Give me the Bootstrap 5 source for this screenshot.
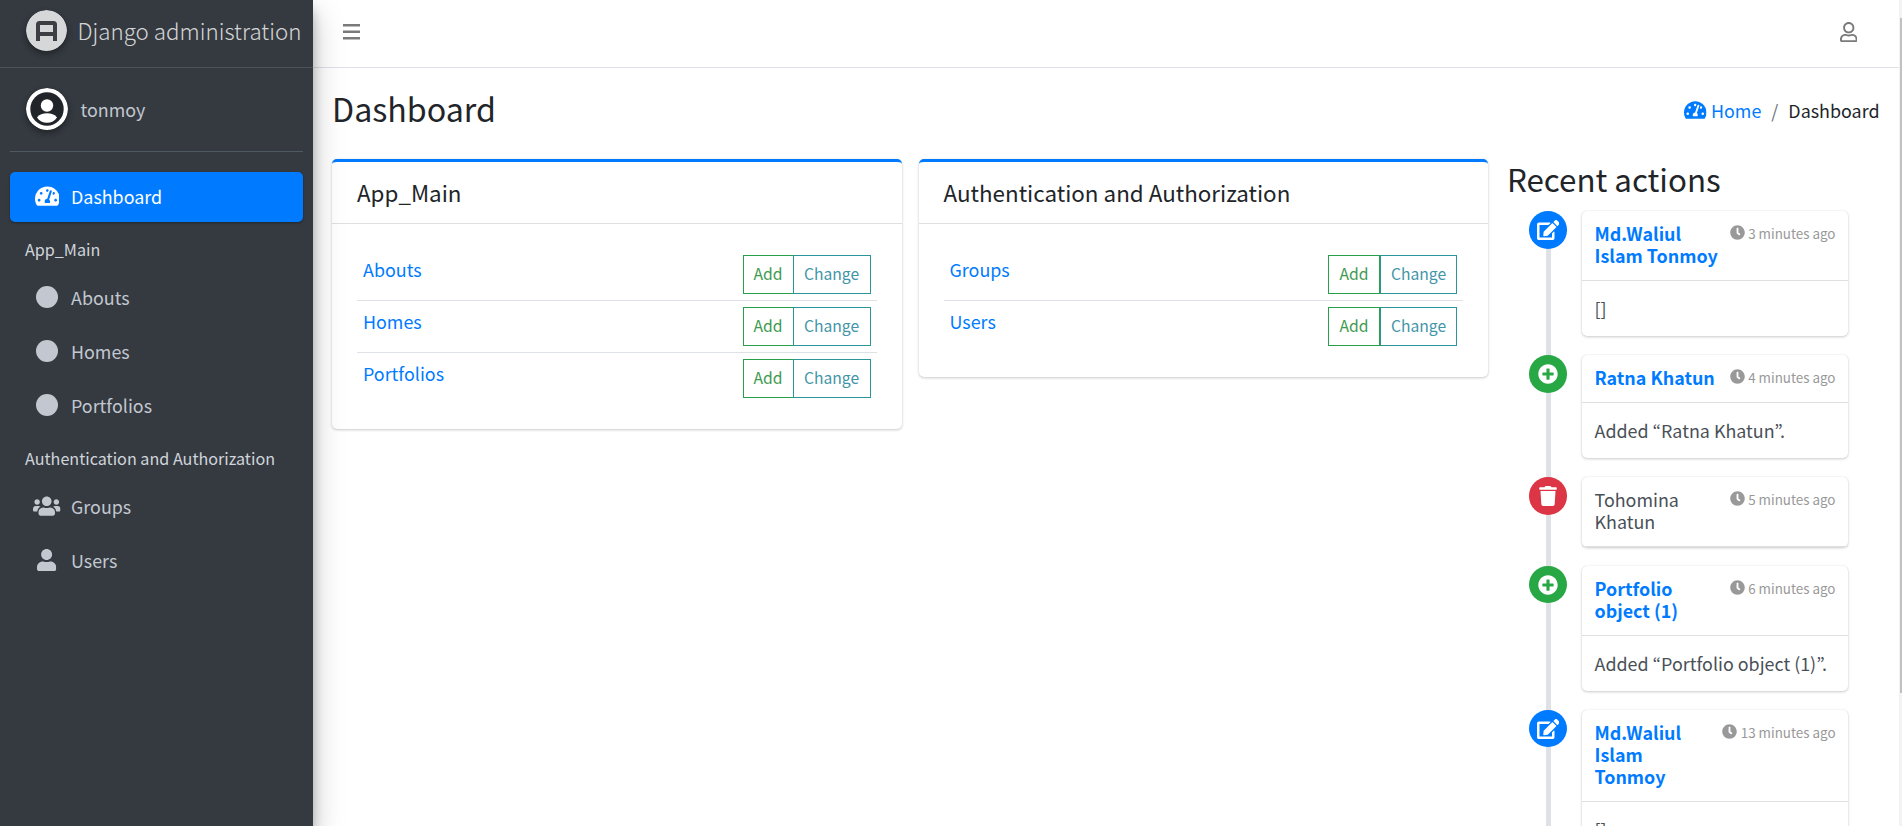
<!DOCTYPE html>
<html lang="en">
<head>
<meta charset="utf-8">
<title>Dashboard | Django administration</title>
<link rel="stylesheet" href="https://cdn.jsdelivr.net/npm/bootstrap@5.3.0/dist/css/bootstrap.min.css">
<style>
html { font-size: 20px; }
body { font-family: "Noto Sans CJK JP", "Noto Sans", sans-serif; font-size: 17.9px; line-height: 30px; color: #212529; background: #fff; height: 826px; overflow: hidden; }
a { color: #007bff; text-decoration: none; }
svg { fill: currentColor; display: block; flex: none; }
.shell { height: 826px; overflow: hidden; }
.side { width: 313px; height: 826px; background: #343a40; box-shadow: 0 14px 28px rgba(0,0,0,.25), 0 10px 10px rgba(0,0,0,.22); z-index: 5; flex: none; color: #c2c7d0; }
.brand { height: 68px; border-bottom: 1px solid #4b545c; padding: 10px 0 0 26px; color: rgba(255,255,255,.8); font-size: 22.35px; font-weight: 300; white-space: nowrap; gap: 10.5px; }
.brand span { padding-top: 5px; }
.round { border-radius: 50%; box-shadow: 0 3px 6px rgba(0,0,0,.16), 0 3px 6px rgba(0,0,0,.23); }
.who { height: 84px; margin: 0 10px 20px 10px; border-bottom: 1px solid #4f5962; padding: 20px 0 0 16px; gap: 12.5px; }
.who span { padding-top: 6px; }
.side .nav-link { color: #c2c7d0; height: 50px; margin: 0 10px 4px 10px; padding: 0 0 2px 21px; display: flex; align-items: center; border-radius: 5px; gap: 8px; }
.side .nav-link.active { background: #007bff; color: #fff; box-shadow: 0 1px 3px rgba(0,0,0,.12), 0 1px 2px rgba(0,0,0,.24); }
.ico { width: 32px; display: flex; justify-content: center; }
.grp { font-size: 16.15px; line-height: 27px; padding: 10px 0 0 25px; height: 47px; color: #d0d4db; }
.grp.first { height: 51px; padding-top: 14px; }
.topbar { height: 68px; border-bottom: 1px solid #dee2e6; color: #7a7a7a; padding: 0 45px 3px 30px; }
.head { padding: 18.5px 22.5px 0 19px; height: 91px; }
h1 { font-size: 32.2px; font-weight: 400; line-height: 43px; margin: 0; }
.crumb { padding-top: 8.5px; gap: 10px; }
.crumb svg { margin-right: 4px; }
.cols { padding-left: 19px; }
.panel { border: 0; border-top: 3px solid #007bff; border-radius: 5px; box-shadow: 0 0 1px rgba(0,0,0,.125), 0 1px 3px rgba(0,0,0,.2); width: 569.5px; flex: none; background: #fff; }
.panel h5 { font-size: 22.4px; font-weight: 400; line-height: 30px; height: 62px; padding: 15px 25px 0; margin: 0; border-bottom: 1px solid #dfdfdf; }
.rows { padding: 25px; }
.line { height: 52px; border-bottom: 1px solid #dee2e6; padding: 6px 6px 0; }
.line > a { margin-top: -1px; }
.line:last-child { border-bottom: 0; height: 51px; }
.btn-sq { height: 39px; border: 1px solid; border-radius: 0; font-size: 15.7px; line-height: 36px; width: 51px; text-align: center; }
.b-add { color: #3d9a50; border-color: #28a049; }
.b-chg { color: #4295a8; border-color: #2a9699; width: 78px; margin-left: -1px; }
.second { margin-left: 17px; }
.second .b-add { width: 52px; }
.second .b-chg { width: 77px; }
.recent { margin-left: 19px; }
h2 { font-size: 31.3px; font-weight: 400; line-height: 40px; margin: 0 0 12px; }
.tl { position: relative; padding-left: 22px; }
.tl::before { content: ""; position: absolute; left: 39px; top: 0; width: 5px; height: 700px; background: #dee2e6; }
.ev { position: relative; display: flex; gap: 14.5px; align-items: flex-start; margin-bottom: 18.75px; }
.dot { width: 38px; height: 37.5px; border-radius: 50%; color: #fff; display: flex; align-items: center; justify-content: center; flex: none; }
.ed { background: #007bff; }
.ad { background: #28a745; }
.de { background: #dc3545; }
.box { width: 266.5px; background: #fff; border-radius: 5px; box-shadow: 0 0 1px rgba(0,0,0,.125), 0 1px 3px rgba(0,0,0,.2); color: #495057; }
.hd { display: flex; justify-content: space-between; line-height: 22px; padding: 11.3px 12.5px 13.7px 13px; border-bottom: 1.25px solid #dfdfdf; white-space: nowrap; }
.when { color: #999; font-size: 13.4px; gap: 3.5px; height: 22px; }
.when svg { margin-top: -1px; }
.tx { padding: 12px 13px 13px; white-space: nowrap; line-height: 30.3px; }
.thumb { position: fixed; right: 0; top: 0; width: 3px; height: 826px; background: #f3f3f3; z-index: 9; }
.thumb::after { content: ""; position: absolute; right: 0; top: 18px; width: 2px; height: 675px; background: #c1c1c1; }
</style>
</head>
<body>
<svg width="0" height="0" class="position-absolute"><defs>
<symbol id="tach" viewBox="0 0 576 512"><path d="M288 32C128.94 32 0 160.94 0 320c0 52.8 14.25 102.26 39.06 144.8 5.61 9.62 16.3 15.2 27.44 15.2h443c11.14 0 21.83-5.58 27.44-15.2C561.75 422.26 576 372.8 576 320c0-159.06-128.94-288-288-288zm0 64c14.71 0 26.58 10.13 30.32 23.65-1.11 2.26-2.64 4.23-3.45 6.67l-9.22 27.67c-5.13 3.49-10.97 6.01-17.64 6.01-17.67 0-32-14.33-32-32S270.33 96 288 96zM96 384c-17.67 0-32-14.33-32-32s14.33-32 32-32 32 14.33 32 32-14.33 32-32 32zm48-160c-17.67 0-32-14.33-32-32s14.33-32 32-32 32 14.33 32 32-14.33 32-32 32zm246.77-72.41l-61.33 184C343.13 347.33 352 364.54 352 384c0 11.72-3.38 22.55-8.88 32H232.88c-5.5-9.45-8.88-20.28-8.88-32 0-33.94 26.5-61.43 59.9-63.59l61.34-184.01c4.17-12.56 17.73-19.45 30.36-15.17 12.57 4.19 19.35 17.79 15.17 30.36zm14.66 57.2l15.52-46.55c3.47-1.29 7.13-2.23 11.05-2.23 17.67 0 32 14.33 32 32s-14.33 32-32 32c-11.38-.01-20.89-6.28-26.57-15.22zM480 384c-17.67 0-32-14.33-32-32s14.33-32 32-32 32 14.33 32 32-14.33 32-32 32z"/></symbol>
<symbol id="edit" viewBox="0 0 576 512"><path d="M402.6 83.2l90.2 90.2c3.8 3.8 3.8 10 0 13.8L274.4 405.6l-92.8 10.3c-12.4 1.4-22.9-9.1-21.5-21.5l10.3-92.8L388.8 83.2c3.8-3.8 10-3.8 13.8 0zm162-22.9l-48.8-48.8c-15.2-15.2-39.9-15.2-55.2 0l-35.4 35.4c-3.8 3.8-3.8 10 0 13.8l90.2 90.2c3.8 3.8 10 3.8 13.8 0l35.4-35.4c15.2-15.3 15.2-40 0-55.2zM384 346.2V448H64V128h229.8c3.2 0 6.2-1.3 8.5-3.5l40-40c7.6-7.6 2.2-20.5-8.5-20.5H48C21.5 64 0 85.5 0 112v352c0 26.5 21.5 48 48 48h352c26.5 0 48-21.5 48-48V306.2c0-10.7-12.9-16-20.5-8.5l-40 40c-2.2 2.3-3.5 5.3-3.5 8.5z"/></symbol>
<symbol id="plus" viewBox="0 0 512 512"><path d="M256 8C119 8 8 119 8 256s111 248 248 248 248-111 248-248S393 8 256 8zm144 276c0 6.6-5.4 12-12 12h-92v92c0 6.6-5.4 12-12 12h-56c-6.6 0-12-5.4-12-12v-92h-92c-6.6 0-12-5.4-12-12v-56c0-6.6 5.4-12 12-12h92v-92c0-6.6 5.4-12 12-12h56c6.6 0 12 5.4 12 12v92h92c6.6 0 12 5.4 12 12v56z"/></symbol>
<symbol id="trash" viewBox="0 0 448 512"><path d="M432 32H312l-9.4-18.7A24 24 0 0 0 281.1 0H166.8a23.72 23.72 0 0 0-21.4 13.3L136 32H16A16 16 0 0 0 0 48v32a16 16 0 0 0 16 16h416a16 16 0 0 0 16-16V48a16 16 0 0 0-16-16zM53.2 467a48 48 0 0 0 47.9 45h245.8a48 48 0 0 0 47.9-45L416 128H32z"/></symbol>
<symbol id="clock" viewBox="0 0 512 512"><path d="M256,8C119,8,8,119,8,256S119,504,256,504,504,393,504,256,393,8,256,8Zm92.49,313h0l-20,25a16,16,0,0,1-22.49,2.5h0l-67-49.72a40,40,0,0,1-15-31.23V112a16,16,0,0,1,16-16h32a16,16,0,0,1,16,16V256l58,42.5A16,16,0,0,1,348.49,321Z"/></symbol>
<symbol id="user" viewBox="0 0 448 512"><path d="M224 256c70.7 0 128-57.3 128-128S294.7 0 224 0 96 57.3 96 128s57.3 128 128 128zm89.6 32h-16.7c-22.2 10.2-46.9 16-72.9 16s-50.6-5.8-72.9-16h-16.7C60.2 288 0 348.2 0 422.4V464c0 26.5 21.5 48 48 48h352c26.5 0 48-21.5 48-48v-41.6c0-74.2-60.2-134.4-134.4-134.4z"/></symbol>
<symbol id="usero" viewBox="0 0 448 512"><path d="M313.6 304c-28.7 0-42.5 16-89.6 16-47.1 0-60.8-16-89.6-16C60.2 304 0 364.2 0 438.4V464c0 26.5 21.5 48 48 48h352c26.5 0 48-21.5 48-48v-25.6c0-74.2-60.2-134.4-134.4-134.4zM400 464H48v-25.6c0-47.6 38.8-86.4 86.4-86.4 14.6 0 38.3 16 89.6 16 51.7 0 74.9-16 89.6-16 47.6 0 86.4 38.8 86.4 86.4V464zM224 288c79.5 0 144-64.5 144-144S303.5 0 224 0 80 64.5 80 144s64.5 144 144 144zm0-240c52.9 0 96 43.1 96 96s-43.1 96-96 96-96-43.1-96-96 43.1-96 96-96z"/></symbol>
<symbol id="users" viewBox="0 0 640 512"><path d="M96 224c35.3 0 64-28.7 64-64s-28.7-64-64-64-64 28.7-64 64 28.7 64 64 64zm448 0c35.3 0 64-28.7 64-64s-28.7-64-64-64-64 28.7-64 64 28.7 64 64 64zm32 32h-64c-17.6 0-33.5 7.1-45.1 18.6 40.3 22.1 68.9 62 75.1 109.4h66c17.7 0 32-14.3 32-32v-32c0-35.3-28.7-64-64-64zm-256 0c61.9 0 112-50.1 112-112S381.9 32 320 32 208 82.1 208 144s50.1 112 112 112zm76.8 32h-8.3c-20.8 10-43.9 16-68.5 16s-47.6-6-68.5-16h-8.3C179.6 288 128 339.6 128 403.2V432c0 26.5 21.5 48 48 48h288c26.5 0 48-21.5 48-48v-28.8c0-63.6-51.6-115.2-115.2-115.2zm-223.7-13.4C161.5 263.1 145.6 256 128 256H64c-35.3 0-64 28.7-64 64v32c0 17.7 14.3 32 32 32h65.9c6.3-47.4 34.9-87.3 75.2-109.4z"/></symbol>
<symbol id="circ" viewBox="0 0 22 22"><circle cx="11" cy="11" r="11"/></symbol>
</defs></svg>
<div class="shell d-flex">
<aside class="side">
  <div class="brand d-flex align-items-start">
    <svg class="round" width="41" height="41" viewBox="0 0 41 41"><circle cx="20.500" cy="20.500" r="20.500" fill="#d6d7d9"/><path d="M12 31V14.500q0-1.500 1.500-1.500h14q1.500 0 1.500 1.500V31M12 24h17" fill="none" stroke="#3b3e43" stroke-width="4"/></svg>
    <span>Django administration</span>
  </div>
  <div class="who d-flex align-items-start">
    <svg class="round" width="42" height="42" viewBox="0 0 42 42"><circle cx="21" cy="21" r="21" fill="#fff"/><circle cx="21" cy="21" r="16.700" fill="#212529"/><circle cx="21" cy="17.500" r="6.200" fill="#fff"/><path d="M11 29.500c2-3 6-4.200 10-4.200s8 1.200 10 4.200c-2 3.500-6 5.300-10 5.300s-8-1.800-10-5.300z" fill="#fff"/></svg>
    <span>tonmoy</span>
  </div>
  <nav>
    <a class="nav-link active mb-0" href="#"><span class="ico"><svg width="24.750" height="22"><use href="#tach"/></svg></span>Dashboard</a>
    <div class="grp first">App_Main</div>
    <a class="nav-link" href="#"><span class="ico"><svg width="22" height="22"><use href="#circ"/></svg></span>Abouts</a>
    <a class="nav-link" href="#"><span class="ico"><svg width="22" height="22"><use href="#circ"/></svg></span>Homes</a>
    <a class="nav-link" href="#"><span class="ico"><svg width="22" height="22"><use href="#circ"/></svg></span>Portfolios</a>
    <div class="grp">Authentication and Authorization</div>
    <a class="nav-link" href="#"><span class="ico"><svg width="27.500" height="22"><use href="#users"/></svg></span>Groups</a>
    <a class="nav-link" href="#"><span class="ico"><svg width="19.250" height="22"><use href="#user"/></svg></span>Users</a>
  </nav>
</aside>
<main class="flex-grow-1">
  <div class="topbar d-flex justify-content-between align-items-center">
    <svg width="17" height="16" viewBox="0 0 17 16"><path d="M0 0h17v2.600H0zM0 6.500h17v2.600H0zM0 13h17v2.600H0z"/></svg>
    <svg width="17.500" height="20"><use href="#usero"/></svg>
  </div>
  <div class="head d-flex justify-content-between align-items-start">
    <h1>Dashboard</h1>
    <div class="crumb d-flex align-items-center"><a href="#" class="d-flex align-items-center"><svg width="22.500" height="20"><use href="#tach"/></svg>Home</a><span class="text-secondary">/</span><span>Dashboard</span></div>
  </div>
  <div class="cols d-flex align-items-start">
    <section class="panel">
      <h5>App_Main</h5>
      <div class="rows">
        <div class="line d-flex justify-content-between"><a href="#">Abouts</a><div class="d-flex"><a class="btn-sq b-add">Add</a><a class="btn-sq b-chg">Change</a></div></div>
        <div class="line d-flex justify-content-between"><a href="#">Homes</a><div class="d-flex"><a class="btn-sq b-add">Add</a><a class="btn-sq b-chg">Change</a></div></div>
        <div class="line d-flex justify-content-between"><a href="#">Portfolios</a><div class="d-flex"><a class="btn-sq b-add">Add</a><a class="btn-sq b-chg">Change</a></div></div>
      </div>
    </section>
    <section class="panel second">
      <h5>Authentication and Authorization</h5>
      <div class="rows">
        <div class="line d-flex justify-content-between"><a href="#">Groups</a><div class="d-flex"><a class="btn-sq b-add">Add</a><a class="btn-sq b-chg ms-0">Change</a></div></div>
        <div class="line d-flex justify-content-between"><a href="#">Users</a><div class="d-flex"><a class="btn-sq b-add">Add</a><a class="btn-sq b-chg ms-0">Change</a></div></div>
      </div>
    </section>
    <section class="recent">
      <h2>Recent actions</h2>
      <div class="tl">
        <div class="ev"><span class="dot ed"><svg width="22.500" height="20"><use href="#edit"/></svg></span><div class="box"><div class="hd"><a class="fw-bold" href="#">Md.Waliul<br>Islam Tonmoy</a><span class="when d-flex align-items-center"><svg width="15" height="15"><use href="#clock"/></svg>3 minutes ago</span></div><div class="tx">[]</div></div></div>
        <div class="ev"><span class="dot ad"><svg width="20" height="20"><use href="#plus"/></svg></span><div class="box"><div class="hd"><a class="fw-bold" href="#">Ratna Khatun</a><span class="when d-flex align-items-center"><svg width="15" height="15"><use href="#clock"/></svg>4 minutes ago</span></div><div class="tx">Added “Ratna Khatun”.</div></div></div>
        <div class="ev"><span class="dot de"><svg width="18" height="20"><use href="#trash"/></svg></span><div class="box"><div class="hd"><span>Tohomina<br>Khatun</span><span class="when d-flex align-items-center"><svg width="15" height="15"><use href="#clock"/></svg>5 minutes ago</span></div></div></div>
        <div class="ev"><span class="dot ad"><svg width="20" height="20"><use href="#plus"/></svg></span><div class="box"><div class="hd"><a class="fw-bold" href="#">Portfolio<br>object (1)</a><span class="when d-flex align-items-center"><svg width="15" height="15"><use href="#clock"/></svg>6 minutes ago</span></div><div class="tx">Added “Portfolio object (1)”.</div></div></div>
        <div class="ev"><span class="dot ed"><svg width="22.500" height="20"><use href="#edit"/></svg></span><div class="box"><div class="hd"><a class="fw-bold" href="#">Md.Waliul<br>Islam<br>Tonmoy</a><span class="when d-flex align-items-center"><svg width="15" height="15"><use href="#clock"/></svg>13 minutes ago</span></div><div class="tx">[]</div></div></div>
      </div>
    </section>
  </div>
</main>
</div>
<div class="thumb"></div>
<script src="https://cdn.jsdelivr.net/npm/bootstrap@5.3.0/dist/js/bootstrap.bundle.min.js"></script>
</body>
</html>
